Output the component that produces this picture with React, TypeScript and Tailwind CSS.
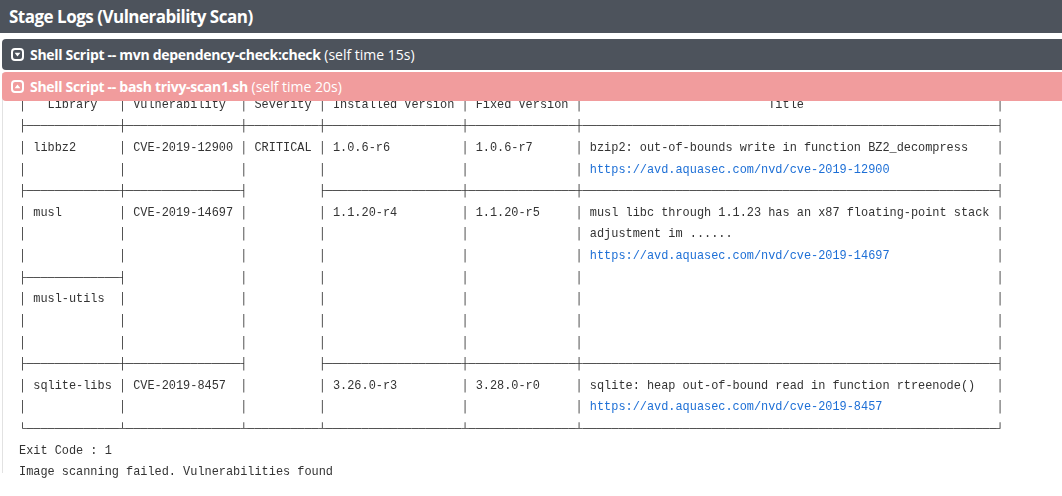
import React from 'react';

const W = [13, 16, 10, 19, 15, 58];

// cells: text per column, bars: 7 junction chars
const cells = (texts: string[], bars = '│││││││') =>
  bars[0] +
  W.map((w, i) => (' ' + (texts[i] || '')).padEnd(w, ' ') + bars[i + 1]).join('');

const rule = (bars: string, fill: boolean[]) =>
  bars[0] + W.map((w, i) => (fill[i] ? '─' : ' ').repeat(w) + bars[i + 1]).join('');

const center = (s: string, w: number) => {
  const left = Math.floor((w - s.length) / 2);
  return ' '.repeat(left) + s + ' '.repeat(w - left - s.length);
};

const all = [true, true, true, true, true, true];
const noSev = [true, true, false, true, true, true];
const libOnly = [true, false, false, false, false, false];

const lines: string[] = [
  rule('┌┬┬┬┬┬┐', all),
  '│' +
    ['   Library   ', ' Vulnerability  ', ' Severity ', ' Installed Version ', ' Fixed Version ', center('Title', 58)].join('│') +
    '│',
  rule('├┼┼┼┼┼┤', all),
  cells(['libbz2', 'CVE-2019-12900', 'CRITICAL', '1.0.6-r6', '1.0.6-r7', 'bzip2: out-of-bounds write in function BZ2_decompress']),
  cells(['', '', '', '', '', 'https://avd.aquasec.com/nvd/cve-2019-12900']),
  rule('├┼┤├┼┼┤', noSev),
  cells(['musl', 'CVE-2019-14697', '', '1.1.20-r4', '1.1.20-r5', 'musl libc through 1.1.23 has an x87 floating-point stack']),
  cells(['', '', '', '', '', 'adjustment im ......']),
  cells(['', '', '', '', '', 'https://avd.aquasec.com/nvd/cve-2019-14697']),
  rule('├┤│││││', libOnly),
  cells(['musl-utils']),
  cells([]),
  cells([]),
  rule('├┼┤├┼┼┤', noSev),
  cells(['sqlite-libs', 'CVE-2019-8457', '', '3.26.0-r3', '3.28.0-r0', 'sqlite: heap out-of-bound read in function rtreenode()']),
  cells(['', '', '', '', '', 'https://avd.aquasec.com/nvd/cve-2019-8457']),
  rule('└┴┴┴┴┴┘', all),
  'Exit Code : 1',
  'Image scanning failed. Vulnerabilities found',
];

const LogLine = ({ text }: { text: string }) => {
  const m = text.match(/https:\/\/\S+/);
  if (!m || m.index === undefined) return <div className="whitespace-pre">{text}</div>;
  return (
    <div className="whitespace-pre">
      {text.slice(0, m.index)}
      <a className="text-[#1d6fd6]">{m[0]}</a>
      {text.slice(m.index + m[0].length)}
    </div>
  );
};

const CaretBox = ({ up }: { up?: boolean }) => (
  <svg width="13" height="13" viewBox="0 0 13 13" className="shrink-0">
    <rect x="1" y="1" width="11" height="11" rx="3" fill="none" stroke="white" strokeWidth="2" />
    {up ? <path d="M3.6 8.2 L6.5 4.4 L9.4 8.2 Z" fill="white" /> : <path d="M3.6 4.8 L6.5 8.6 L9.4 4.8 Z" fill="white" />}
  </svg>
);

const StepBar = ({ cmd, time, failed }: { cmd: string; time: string; failed?: boolean }) => (
  <div
    className={
      failed
        ? 'relative z-10 mt-[2px] ml-[2px] -mr-[8px] flex h-[29px] items-center gap-[6px] rounded-[4px] bg-[#f19c9d] pl-[9px] text-white'
        : 'ml-[2px] -mr-[8px] flex h-[31px] items-center gap-[6px] rounded-[4px] bg-[#4d535c] pl-[9px] text-white'
    }
  >
    <CaretBox up={failed} />
    <span className="text-[14px]">
      <span className="font-bold tracking-[-0.3px]">Shell Script -- {cmd}</span> (self time {time})
    </span>
  </div>
);

export default function App() {
  return (
    <div className="h-[496px] w-[1062px] overflow-hidden bg-white font-['Open_Sans',sans-serif]">
      <div className="flex h-[33px] items-center bg-[#4d535c] pl-[9px] text-[17px] font-bold tracking-[-0.5px] text-white">
        Stage Logs (Vulnerability Scan)
      </div>

      <div className="mt-[6px]">
        <StepBar cmd="mvn dependency-check:check" time="15s" />
        <StepBar cmd="bash trivy-scan1.sh" time="20s" failed />

        <div className="ml-[2px] h-[400px] border-l border-[#e2e2e2]">
          <div className="-mt-[28px] pl-[16px] font-['Liberation_Mono',monospace] text-[11.9px] leading-[21.62px] text-[#333] will-change-transform">
            {lines.map((l, i) => (
              <LogLine key={i} text={l} />
            ))}
          </div>
        </div>
      </div>
    </div>
  );
}
